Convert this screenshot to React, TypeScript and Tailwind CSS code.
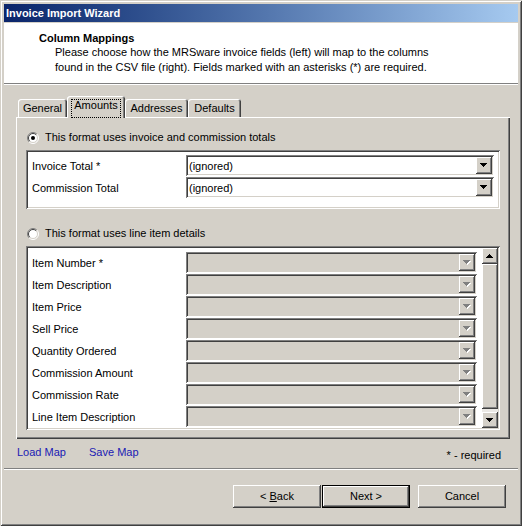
import React from "react";

// classic 3D edges, drawn as stacked inset shadows
const RAISED =
  "shadow-[inset_-1px_-1px_#404040,inset_1px_1px_#ffffff,inset_-2px_-2px_#808080,inset_2px_2px_#d4d0c8]";
const SUNKEN =
  "shadow-[inset_1px_1px_#808080,inset_-1px_-1px_#ffffff,inset_2px_2px_#404040,inset_-2px_-2px_#d4d0c8]";
const PANEL = "shadow-[inset_1px_1px_#ffffff,inset_-1px_-1px_#404040,inset_-2px_-2px_#808080]";
const FRAME =
  "shadow-[inset_1px_1px_#d4d0c8,inset_-1px_-1px_#404040,inset_2px_2px_#ffffff,inset_-2px_-2px_#808080]";

const totals = ["Invoice Total *", "Commission Total"];
const lineItems = [
  "Item Number *",
  "Item Description",
  "Item Price",
  "Sell Price",
  "Quantity Ordered",
  "Commission Amount",
  "Commission Rate",
  "Line Item Description",
];

function Arrow({ up, disabled }: { up?: boolean; disabled?: boolean }) {
  const rows = [0, 1, 2, 3];
  const bars = (color: string, dx: number, dy: number) =>
    rows.map((r) => (
      <rect
        key={color + r}
        x={r + dx}
        y={(up ? 3 - r : r) + dy}
        width={7 - r * 2}
        height={1}
        fill={color}
      />
    ));
  return (
    <svg width="8" height="5" shapeRendering="crispEdges">
      {disabled ? (
        <>
          {bars("#ffffff", 1, 1)}
          {bars("#808080", 0, 0)}
        </>
      ) : (
        bars("#000000", 0, 0)
      )}
    </svg>
  );
}

function Radio({ checked }: { checked?: boolean }) {
  return (
    <svg width="12" height="12" className="shrink-0">
      <circle cx="6" cy="6" r="5" fill="#ffffff" />
      <path d="M2.1 9.9A5.5 5.5 0 0 1 9.9 2.1" fill="none" stroke="#808080" />
      <path d="M9.9 2.1A5.5 5.5 0 0 1 2.1 9.9" fill="none" stroke="#ffffff" />
      <path d="M2.8 9.2A4.5 4.5 0 0 1 9.2 2.8" fill="none" stroke="#404040" />
      <path d="M9.2 2.8A4.5 4.5 0 0 1 2.8 9.2" fill="none" stroke="#d4d0c8" />
      {checked && <circle cx="6" cy="6" r="2" fill="#000000" />}
    </svg>
  );
}

function Combo({ value, disabled, width }: { value?: string; disabled?: boolean; width: string }) {
  return (
    <div
      className={`flex h-[21px] items-center p-[2px] ${width} ${SUNKEN} ${
        disabled ? "bg-[#d4d0c8]" : "bg-white"
      }`}
    >
      <span className="flex-1 pl-[1px] pt-[2px] leading-[13px]">{value}</span>
      <div className={`flex h-[17px] w-[16px] items-center justify-center bg-[#d4d0c8] ${RAISED}`}>
        <Arrow disabled={disabled} />
      </div>
    </div>
  );
}

function Tab({ label, width, active }: { label: string; width: string; active?: boolean }) {
  if (active) {
    return (
      <div
        className={`relative z-10 flex h-[22px] self-start justify-center rounded-t-[3px] bg-[#d4d0c8] pt-[3px] ${width} shadow-[inset_1px_1px_#ffffff,inset_-1px_0_#404040,inset_-2px_0_#808080]`}
      >
        <span className="border border-dotted border-black px-[2px] leading-[11px]">{label}</span>
      </div>
    );
  }
  return (
    <div
      className={`flex h-[18px] items-center justify-center rounded-t-[3px] pt-[1px] ${width} shadow-[inset_1px_1px_#ffffff,inset_-1px_0_#404040,inset_-2px_0_#808080]`}
    >
      {label}
    </div>
  );
}

function Button({ children, primary }: { children: React.ReactNode; primary?: boolean }) {
  return (
    <button
      className={`flex h-[23px] w-[88px] items-center justify-center bg-[#d4d0c8] ${RAISED} ${
        primary ? "border border-black" : ""
      }`}
    >
      {children}
    </button>
  );
}

export default function App() {
  return (
    <div
      className={`flex h-[526px] w-[522px] flex-col bg-[#d4d0c8] p-[4px] font-['Liberation_Sans',Arial,sans-serif] text-[11px] leading-[13px] text-black ${FRAME}`}
    >
      {/* caption */}
      <div className="flex h-[18px] items-center bg-gradient-to-r from-[#0a246a] to-[#a6caf0] pl-[2px] font-bold text-white">
        Invoice Import Wizard
      </div>

      {/* wizard header */}
      <div className="mt-[1px] h-[60px] bg-white pl-[35px] pt-[8px]">
        <div className="font-bold leading-[14px]">Column Mappings</div>
        <div className="pl-[16px] leading-[15px]">
          <div>Please choose how the MRSware invoice fields (left) will map to the columns</div>
          <div>found in the CSV file (right). Fields marked with an asterisks (*) are required.</div>
        </div>
      </div>
      <div className="h-px bg-[#808080]" />
      <div className="h-px bg-white" />

      <div className="pl-[12px] pr-[8px] pt-[11px]">
        {/* tab strip */}
        <div className="flex h-[21px] items-end pl-[2px]">
          <Tab label="General" width="w-[49px]" />
          <Tab label="Amounts" width="w-[58px]" active />
          <Tab label="Addresses" width="w-[63px]" />
          <Tab label="Defaults" width="w-[53px]" />
        </div>

        {/* tab page */}
        <div className={`flex h-[322px] flex-col px-[10px] pt-[14px] ${PANEL}`}>
          <label className="ml-[1px] flex h-[13px] items-center gap-[6px]">
            <Radio checked />
            <span>This format uses invoice and commission totals</span>
          </label>

          <div className={`mt-[6px] flex h-[59px] flex-col gap-[1px] bg-white pl-[6px] pt-[5px] ${SUNKEN}`}>
            {totals.map((t) => (
              <div key={t} className="flex items-center">
                <span className="w-[154px] pt-[1px]">{t}</span>
                <Combo value="(ignored)" width="w-[308px]" />
              </div>
            ))}
          </div>

          <label className="ml-[1px] mt-[18px] flex h-[13px] items-center gap-[6px]">
            <Radio />
            <span>This format uses line item details</span>
          </label>

          <div className={`mt-[6px] flex h-[184px] bg-white p-[2px] ${SUNKEN}`}>
            <div className="flex flex-1 flex-col gap-[1px] overflow-hidden pl-[4px] pt-[4px]">
              {lineItems.map((t) => (
                <div key={t} className="flex shrink-0 items-center">
                  <span className="w-[154px] pt-[1px]">{t}</span>
                  <Combo disabled width="w-[291px]" />
                </div>
              ))}
            </div>
            {/* vertical scroll bar */}
            <div className="flex w-[16px] flex-col bg-[#ebe9e5]">
              <div className={`flex h-[16px] items-center justify-center bg-[#d4d0c8] ${RAISED}`}>
                <Arrow up />
              </div>
              <div className={`h-[145px] bg-[#d4d0c8] ${RAISED}`} />
              <div className="flex-1" />
              <div className={`flex h-[16px] items-center justify-center bg-[#d4d0c8] ${RAISED}`}>
                <Arrow />
              </div>
            </div>
          </div>
        </div>

        {/* map links */}
        <div className="flex h-[29px] items-start">
          <a className="ml-[1px] mt-[7px] w-[72px] text-[#1a1ab4]">Load Map</a>
          <a className="mt-[7px] text-[#1a1ab4]">Save Map</a>
          <span className="ml-auto mr-[9px] mt-[10px]">* - required</span>
        </div>
      </div>

      <div className="h-px bg-[#808080]" />
      <div className="h-px bg-white" />

      {/* wizard buttons */}
      <div className="flex justify-end pr-[12px] pt-[15px]">
        <Button>
          &lt; <span className="ml-[3px] underline">B</span>ack
        </Button>
        <div className="w-[1px]" />
        <Button primary>Next &gt;</Button>
        <div className="w-[8px]" />
        <Button>Cancel</Button>
      </div>
    </div>
  );
}
